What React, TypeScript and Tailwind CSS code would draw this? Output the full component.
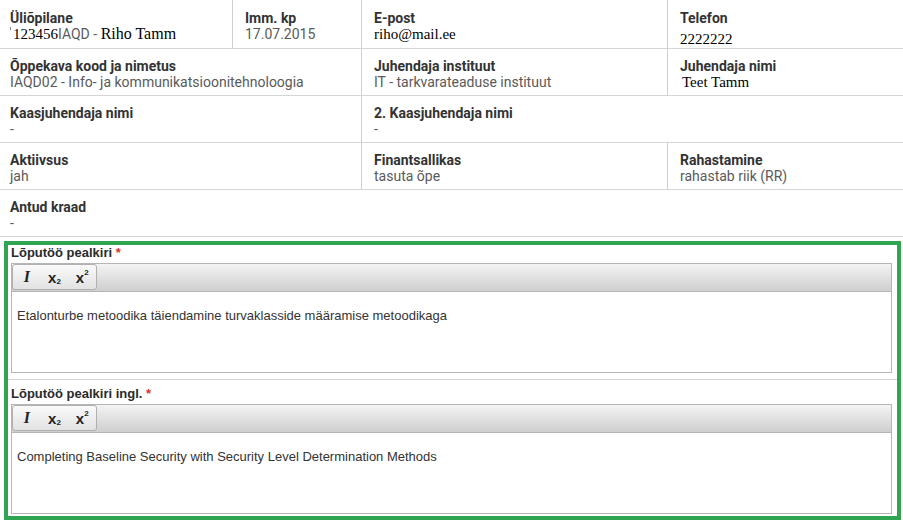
import React from "react";

const roboto = { fontFamily: "Roboto, 'Noto Sans', sans-serif" };

function Label({ children }: { children: React.ReactNode }) {
  return <div className="text-[14px] leading-[16px] font-bold text-[#333]">{children}</div>;
}
function Val({ children }: { children: React.ReactNode }) {
  return <div className="text-[14px] leading-[16px] text-[#5a5a5a]">{children}</div>;
}
function Serif({ children, className = "" }: { children: React.ReactNode; className?: string }) {
  return (
    <span className={"text-[15px] text-black " + className} style={{ fontFamily: "'Liberation Serif', 'Times New Roman', serif" }}>
      {children}
    </span>
  );
}

function Editor({ text }: { text: string }) {
  return (
    <div className="border border-[#b6b6b6] h-[110px] flex flex-col">
      <div className="h-[28px] border-b border-[#b6b6b6] bg-gradient-to-b from-[#f3f3f3] to-[#cfcfcf] flex items-start">
        <div className="h-[26px] w-[85px] mt-0 border border-[#b0b0b0] rounded-[3px] bg-gradient-to-b from-[#fafafa] to-[#e2e2e2] flex items-center text-[#222]">
          <div className="w-[28px] flex justify-center">
            <span className="text-[16px] font-bold italic leading-none" style={{ fontFamily: "'Liberation Serif', serif" }}>I</span>
          </div>
          <div className="w-[28px] flex justify-center items-end">
            <span className="text-[15px] font-bold leading-none" style={{ fontFamily: "'Liberation Sans', Arial, sans-serif" }}>x</span>
            <span className="text-[8px] font-bold leading-none relative top-[1px]" style={{ fontFamily: "'Liberation Sans', Arial, sans-serif" }}>2</span>
          </div>
          <div className="w-[28px] flex justify-center items-start">
            <span className="text-[15px] font-bold leading-none" style={{ fontFamily: "'Liberation Sans', Arial, sans-serif" }}>x</span>
            <span className="text-[8px] font-bold leading-none relative -top-[1px]" style={{ fontFamily: "'Liberation Sans', Arial, sans-serif" }}>2</span>
          </div>
        </div>
      </div>
      <div className="flex-1 bg-white pl-[5px] pt-[16px] text-[13px] leading-[16px] text-[#333]">{text}</div>
    </div>
  );
}

export default function App() {
  const cell = "border-b border-[#d6d6d6]";
  const first = "pl-[10px]";
  const other = "pl-[12px] border-l border-l-[#cfcfcf]";
  return (
    <div className="w-[903px] h-[522px] bg-white overflow-hidden" style={roboto}>
      <div className="grid grid-cols-[232px_129px_306px_1fr] grid-rows-[49px_47px_47px_47px_47px]">
        {/* row 1 */}
        <div className={`${cell} ${first} pt-[10px]`}>
          <Label>Üliõpilane</Label>
          <div className="text-[14px] leading-[16px] text-[#5a5a5a] flex items-baseline">
            <span className="inline-block w-px h-[3px] bg-[#888] mr-[2px] self-start mt-[1px]"></span>
            <Serif>123456</Serif>
            <span>IAQD -&nbsp;</span>
            <Serif className="text-[16px]">Riho Tamm</Serif>
          </div>
        </div>
        <div className={`${cell} ${other} pt-[10px]`}>
          <Label>Imm. kp</Label>
          <Val>17.07.2015</Val>
        </div>
        <div className={`${cell} ${other} pt-[10px]`}>
          <Label>E-post</Label>
          <div className="leading-[16px]"><Serif>riho@mail.ee</Serif></div>
        </div>
        <div className={`${cell} ${other} pt-[10px]`}>
          <Label>Telefon</Label>
          <div className="leading-[16px] mt-[5px]"><Serif>2222222</Serif></div>
        </div>
        {/* row 2 */}
        <div className={`${cell} ${first} pt-[9px] col-span-2`}>
          <Label>Õppekava kood ja nimetus</Label>
          <Val>IAQD02 - Info- ja kommunikatsioonitehnoloogia</Val>
        </div>
        <div className={`${cell} ${other} pt-[9px]`}>
          <Label>Juhendaja instituut</Label>
          <Val>IT - tarkvarateaduse instituut</Val>
        </div>
        <div className={`${cell} ${other} pt-[9px]`}>
          <Label>Juhendaja nimi</Label>
          <div className="leading-[16px] pl-[2px]"><Serif>Teet Tamm</Serif></div>
        </div>
        {/* row 3 */}
        <div className={`${cell} ${first} pt-[9px] col-span-2`}>
          <Label>Kaasjuhendaja nimi</Label>
          <Val>-</Val>
        </div>
        <div className={`${cell} ${other} pt-[9px] col-span-2`}>
          <Label>2. Kaasjuhendaja nimi</Label>
          <Val>-</Val>
        </div>
        {/* row 4 */}
        <div className={`${cell} ${first} pt-[9px] col-span-2`}>
          <Label>Aktiivsus</Label>
          <Val>jah</Val>
        </div>
        <div className={`${cell} ${other} pt-[9px]`}>
          <Label>Finantsallikas</Label>
          <Val>tasuta õpe</Val>
        </div>
        <div className={`${cell} ${other} pt-[9px]`}>
          <Label>Rahastamine</Label>
          <Val>rahastab riik (RR)</Val>
        </div>
        {/* row 5 */}
        <div className={`${cell} ${first} pt-[9px] col-span-4`}>
          <Label>Antud kraad</Label>
          <Val>-</Val>
        </div>
      </div>

      <div className="mt-[4px] ml-[4px] w-[897px] h-[279px] border-4 border-[#31a452]" style={{ fontFamily: "'Liberation Sans', Arial, sans-serif" }}>
        <div className="pl-[3px] pr-[5px]">
          <div className="h-[18px] text-[13px] leading-[15px] font-bold text-[#2a2a2a]">
            Lõputöö pealkiri <span className="text-[#d9312b]">*</span>
          </div>
          <Editor text="Etalonturbe metoodika täiendamine turvaklasside määramise metoodikaga" />
        </div>
        <div className="mt-[6px] border-t border-[#d6d6d6] pt-[6px] pl-[3px] pr-[5px]">
          <div className="h-[18px] text-[13px] leading-[15px] font-bold text-[#2a2a2a]">
            Lõputöö pealkiri ingl. <span className="text-[#d9312b]">*</span>
          </div>
          <Editor text="Completing Baseline Security with Security Level Determination Methods" />
        </div>
      </div>
    </div>
  );
}
